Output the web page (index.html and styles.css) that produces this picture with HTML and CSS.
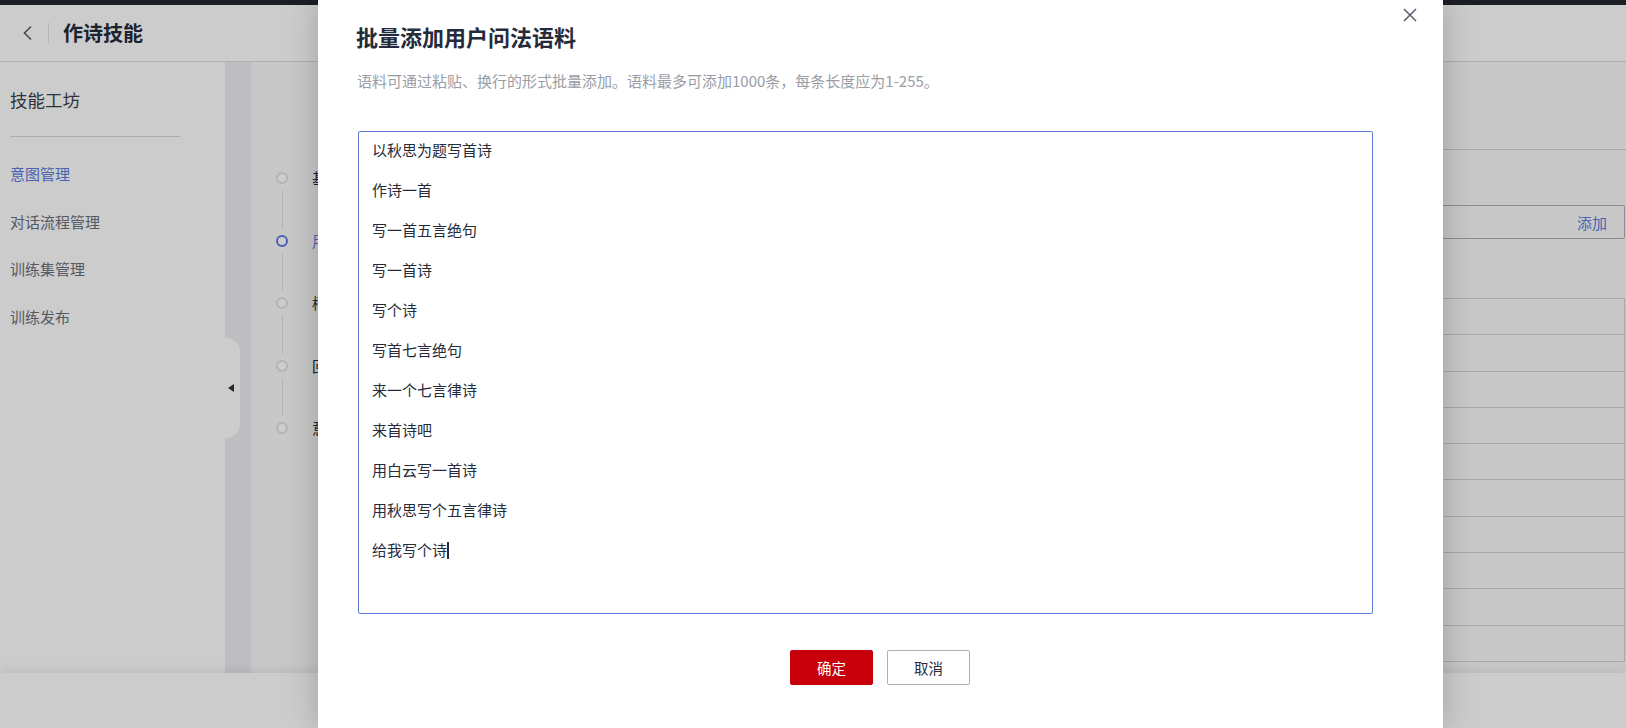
FILE: index.html
```html
<!DOCTYPE html>
<html lang="zh-CN">
<head>
<meta charset="utf-8">
<title>作诗技能</title>
<link rel="stylesheet" href="styles.css">
</head>
<body>
<div class="page">
  <div class="topbar"></div>
  <header class="header">
    <span class="back">
      <svg width="12" height="16" viewBox="0 0 12 16"><path d="M9 1.5 L2.5 8 L9 14.5" fill="none" stroke="#575d6c" stroke-width="1.6"/></svg>
    </span>
    <span class="vsep"></span>
    <h1 class="skill-title">作诗技能</h1>
  </header>
  <div class="body">
    <aside class="sidebar">
      <div class="side-title">技能工坊</div>
      <div class="side-divider"></div>
      <nav class="menu">
        <a class="menu-item active">意图管理</a>
        <a class="menu-item">对话流程管理</a>
        <a class="menu-item">训练集管理</a>
        <a class="menu-item">训练发布</a>
      </nav>
    </aside>
    <div class="strip"></div>
    <div class="handle"><span class="tri"></span></div>
    <main class="main">
      <div class="steps">
        <div class="step"><span class="dot"></span><span class="step-label">基本信息</span></div>
        <div class="conn"></div>
        <div class="step current"><span class="dot"></span><span class="step-label">用户问法</span></div>
        <div class="conn"></div>
        <div class="step"><span class="dot"></span><span class="step-label">槽位信息</span></div>
        <div class="conn"></div>
        <div class="step"><span class="dot"></span><span class="step-label">回复话术</span></div>
        <div class="conn"></div>
        <div class="step"><span class="dot"></span><span class="step-label">意图确认</span></div>
      </div>
      <div class="panel">
        <div class="tabs"></div>
        <div class="add-row"><span class="add-btn">添加</span></div>
        <div class="table">
          <div class="row"></div><div class="row"></div><div class="row"></div><div class="row"></div><div class="row"></div>
          <div class="row"></div><div class="row"></div><div class="row"></div><div class="row"></div><div class="row"></div>
        </div>
      </div>
    </main>
  </div>
  <footer class="footer"></footer>
</div>

<div class="mask"></div>

<div class="modal">
  <span class="close">
    <svg width="14" height="14" viewBox="0 0 14 14"><path d="M1 1 L13 13 M13 1 L1 13" stroke="#575d6c" stroke-width="1.5" fill="none"/></svg>
  </span>
  <h2 class="modal-title">批量添加用户问法语料</h2>
  <p class="modal-desc">语料可通过粘贴、换行的形式批量添加。语料最多可添加1000条，每条长度应为1-255。</p>
  <div class="corpus">
    <div class="line">以秋思为题写首诗</div>
    <div class="line">作诗一首</div>
    <div class="line">写一首五言绝句</div>
    <div class="line">写一首诗</div>
    <div class="line">写个诗</div>
    <div class="line">写首七言绝句</div>
    <div class="line">来一个七言律诗</div>
    <div class="line">来首诗吧</div>
    <div class="line">用白云写一首诗</div>
    <div class="line">用秋思写个五言律诗</div>
    <div class="line">给我写个诗<span class="caret"></span></div>
  </div>
  <div class="actions">
    <button class="btn btn-primary">确定</button>
    <button class="btn btn-default">取消</button>
  </div>
</div>
</body>
</html>
```

FILE: styles.css
```css
html, body {
  margin: 0;
  padding: 0;
}
body {
  width: 1626px;
  height: 728px;
  overflow: hidden;
  position: relative;
  font-family: "Noto Sans CJK SC", "Noto Sans", sans-serif;
  color: #252b3a;
  background: #fff;
}
.page {
  width: 1626px;
  height: 728px;
  display: flex;
  flex-direction: column;
}
.topbar {
  height: 5px;
  background: #22262f;
  flex: none;
}
.header {
  height: 56px;
  flex: none;
  border-bottom: 1px solid #dcdde0;
  background: #fff;
  display: flex;
  align-items: center;
  padding-left: 22px;
}
.back {
  width: 12px;
  height: 16px;
  display: flex;
}
.vsep {
  width: 1px;
  height: 20px;
  background: #dfe1e6;
  margin-left: 14px;
}
.skill-title {
  margin: 0 0 0 14px;
  font-size: 20px;
  font-weight: 700;
  line-height: 28px;
  color: #252b3a;
}
.body {
  height: 611px;
  flex: none;
  display: flex;
  position: relative;
}
.sidebar {
  width: 225px;
  flex: none;
  background: #fff;
  padding-left: 10px;
  box-sizing: border-box;
}
.side-title {
  margin-top: 26px;
  font-size: 17.5px;
  line-height: 24px;
  color: #3a3f4b;
}
.side-divider {
  width: 170px;
  height: 1px;
  background: #d6d8dc;
  margin-top: 24px;
}
.menu {
  display: flex;
  flex-direction: column;
  margin-top: 26px;
}
.menu-item {
  font-size: 15px;
  line-height: 22px;
  height: 22px;
  margin-bottom: 25.5px;
  color: #6c707b;
}
.menu-item.active {
  color: #5e7ce0;
}
.strip {
  width: 26px;
  flex: none;
  background: #eceef3;
}
.handle {
  position: absolute;
  left: 225px;
  top: 276px;
  width: 15px;
  height: 100px;
  background: #fff;
  border-radius: 0 14px 14px 0;
  display: flex;
  align-items: center;
  padding-left: 3px;
  box-sizing: border-box;
}
.tri {
  width: 0;
  height: 0;
  border-top: 4.5px solid transparent;
  border-bottom: 4.5px solid transparent;
  border-right: 6px solid #333;
}
.main {
  flex: 1;
  display: flex;
  background: #fafafa;
  padding-left: 25px;
}
.steps {
  width: 300px;
  flex: none;
  padding-top: 110px;
  display: flex;
  flex-direction: column;
}
.step {
  height: 12px;
  display: flex;
  align-items: center;
}
.dot {
  width: 12px;
  height: 12px;
  box-sizing: border-box;
  border: 2px solid #dfe1e6;
  border-radius: 50%;
  flex: none;
  background: #fff;
}
.step.current .dot {
  border-color: #5e7ce0;
  border-width: 2.5px;
}
.step-label {
  margin-left: 24px;
  font-size: 15px;
  line-height: 20px;
  white-space: nowrap;
  color: #252b3a;
}
.step.current .step-label {
  color: #5e7ce0;
}
.conn {
  width: 1px;
  height: 38.5px;
  margin: 6px 0 6px 5.5px;
  background: #dfe1e6;
}
.panel {
  flex: 1;
  margin-right: 1px;
  display: flex;
  flex-direction: column;
}
.tabs {
  height: 87px;
  border-bottom: 1px solid #d0d2d6;
  margin-right: -1px;
}
.add-row {
  margin-top: 55px;
  height: 34px;
  box-sizing: border-box;
  border: 1px solid #adb0b8;
  border-radius: 2px;
  display: flex;
  align-items: center;
  justify-content: flex-end;
  padding-right: 17px;
}
.add-btn {
  font-size: 15px;
  color: #5e7ce0;
}
.table {
  margin-top: 59px;
  border-top: 1px solid #d0d2d6;
  border-right: 1px solid #d0d2d6;
}
.row {
  height: 35.3px;
  border-bottom: 1px solid #d0d2d6;
}
.footer {
  height: 55px;
  flex: none;
  background: #fff;
  box-shadow: 0 -3px 10px rgba(0, 0, 0, 0.07);
  position: relative;
}
.mask {
  position: absolute;
  left: 0;
  top: 0;
  width: 1626px;
  height: 728px;
  background: rgba(0, 0, 0, 0.2);
}
.modal {
  position: absolute;
  left: 318px;
  top: 0;
  width: 1125px;
  height: 728px;
  background: #fff;
  box-shadow: 0 0 30px rgba(0, 0, 0, 0.22);
  box-sizing: border-box;
  padding: 21px 39px 0 38px;
  display: flex;
  flex-direction: column;
}
.close {
  position: absolute;
  left: 1085px;
  top: 8px;
  width: 14px;
  height: 14px;
  display: flex;
}
.modal-title {
  margin: 0;
  font-size: 22px;
  font-weight: 700;
  line-height: 30px;
  color: #252b3a;
}
.modal-desc {
  margin: 20px 0 0 1px;
  font-size: 15px;
  line-height: 20px;
  color: #9a9da5;
}
.corpus {
  margin: 40px 0 0 2px;
  width: 1015px;
  height: 483px;
  box-sizing: border-box;
  border: 1px solid #5e7ce0;
  border-radius: 2px;
  padding: 0 13px;
  font-size: 15px;
  line-height: 36px;
  color: #252b3a;
}
.line {
  height: 40px;
  white-space: nowrap;
}
.caret {
  display: inline-block;
  width: 2px;
  height: 17px;
  background: #252b3a;
  vertical-align: -3px;
}
.actions {
  margin-top: 36px;
  display: flex;
  justify-content: center;
  gap: 14px;
}
.btn {
  width: 83px;
  height: 35px;
  box-sizing: border-box;
  border-radius: 2px;
  font-family: "Noto Sans CJK SC", "Noto Sans", sans-serif;
  font-size: 14.5px;
  padding: 0;
}
.btn-primary {
  background: #c7000b;
  border: 1px solid #c7000b;
  color: #fff;
}
.btn-default {
  background: #fff;
  border: 1px solid #adb0b8;
  color: #252b3a;
}
```
